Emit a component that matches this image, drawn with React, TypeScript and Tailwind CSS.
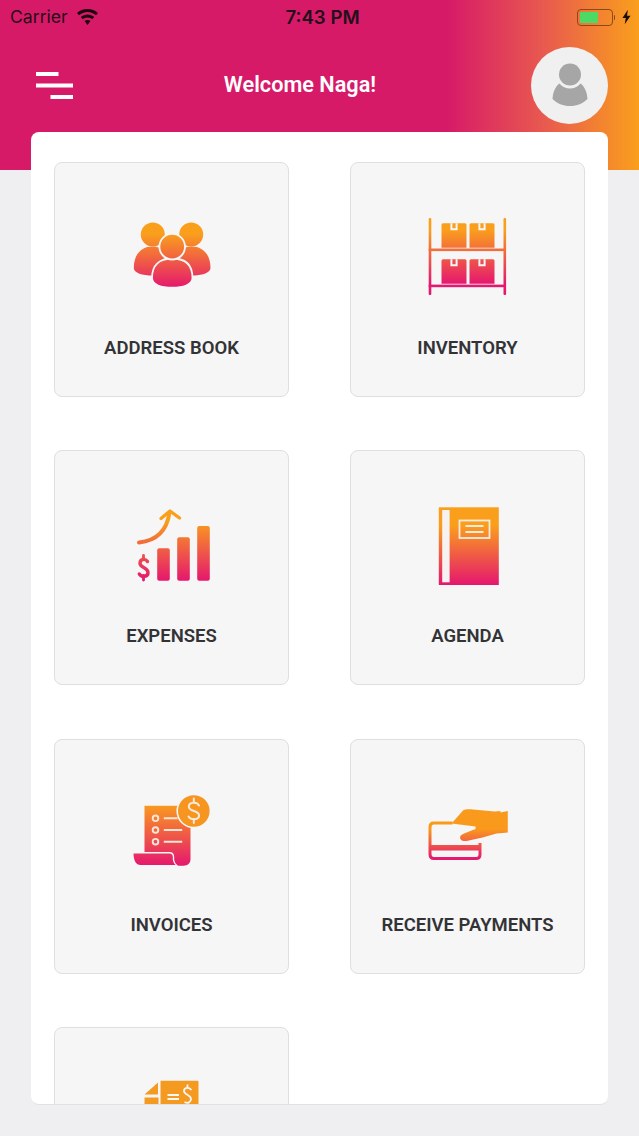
import React from "react";

const Grad = ({ id, y1, y2, from = "#fa9f1c", to = "#e5176f" }: { id: string; y1: number; y2: number; from?: string; to?: string }) => (
  <defs>
    <linearGradient id={id} gradientUnits="userSpaceOnUse" x1="0" x2="0" y1={y1} y2={y2}>
      <stop offset="0" stopColor={from} />
      <stop offset="1" stopColor={to} />
    </linearGradient>
  </defs>
);

const Box = ({ vb, children }: { vb: string; children: React.ReactNode }) => (
  <svg width="100" height="90" viewBox={vb} className="block shrink-0">
    {children}
  </svg>
);

const People = () => (
  <Box vb="1.5 0 100 90">
    <Grad id="g1" y1={24} y2={78} />
    <g fill="url(#g1)">
      <circle cx="32.3" cy="24.5" r="12" />
      <circle cx="70.7" cy="24.5" r="12" />
      <path d="M13.3 58C13.3 44 21 36.5 32 36.5C37 36.5 41 38 44 41L44 62L32 65.5C22 65.5 13.3 63 13.3 58Z" />
      <path d="M90 58C90 44 82 36.5 71 36.5C66 36.5 62 38 59 41L59 62L71 65.5C81 65.5 90 63 90 58Z" />
      <path d="M31.5 68C31.5 55 39 48.5 51.7 48.5C64.5 48.5 72 55 72 68C72 75 62 77.7 51.7 77.7C41 77.7 31.5 75 31.5 68Z" stroke="#f6f6f8" strokeWidth="1.8" />
      <circle cx="51.7" cy="36.7" r="12.8" stroke="#f6f6f8" strokeWidth="1.8" />
    </g>
  </Box>
);

const Carton = ({ x, y }: { x: number; y: number }) => (
  <g>
    <path d={`M${x + 1.5} ${y}H${x + 23.5}a1.5 1.5 0 0 1 1.5 1.5V${y + 24.5}H${x}V${y + 1.5}a1.5 1.5 0 0 1 1.5-1.5Z`} fill="url(#g2)" />
    <path d={`M${x + 12.5 - 3.6} ${y}v7h7.2v-7h-2v5h-3.2v-5Z`} fill="#f6f6f8" />
  </g>
);

const Shelf = () => (
  <Box vb="2.5 0 100 90">
    <Grad id="g2" y1={20} y2={74} />
    <g fill="url(#g2)">
      <rect x="13.2" y="8" width="2.6" height="77" rx="1" />
      <rect x="88" y="8" width="2.6" height="77" rx="1" />
      <rect x="13.2" y="38.5" width="77" height="2.6" />
      <rect x="13.2" y="74.6" width="77" height="2.6" />
    </g>
    <Carton x={26} y={13.3} />
    <Carton x={54} y={13.3} />
    <Carton x={26} y={49.3} />
    <Carton x={54} y={49.3} />
  </Box>
);

const Chart = () => (
  <Box vb="-3.5 -2 100 90">
    <Grad id="g3" y1={20} y2={81} />
    <g fill="url(#g3)">
      <rect x="31.7" y="48.3" width="12.6" height="32.5" rx="2" />
      <rect x="51.7" y="37.3" width="12.6" height="43.5" rx="2" />
      <rect x="71.7" y="26" width="12.6" height="54.8" rx="2" />
    </g>
    <g fill="none" stroke="url(#g3)" strokeLinecap="round" strokeLinejoin="round">
      <path d="M13.5 42.5C28 41 41 33 44 12.5" strokeWidth="4" />
      <path d="M35.5 18.5L44.5 11L54 18" strokeWidth="3.4" />
      <path d="M22 61.5C20 58.5 14.8 58.5 14.5 63C14.2 68 22.3 67 22.5 72.5C22.7 77 16 77.5 13.8 74" strokeWidth="3.4" />
      <path d="M18 55.5V59M18 75.5V80" strokeWidth="2.8" />
    </g>
  </Box>
);

const Notebook = () => (
  <Box vb="-2.5 -2 100 90">
    <Grad id="g4" y1={25} y2={85} />
    <rect x="18.3" y="7.3" width="60" height="77.7" fill="url(#g4)" />
    <rect x="21.7" y="10" width="7.4" height="72.3" fill="#f7f2f2" />
    <rect x="39" y="20.5" width="30" height="17.5" fill="none" stroke="#f9ecdf" strokeWidth="1.8" />
    <path d="M45 26H63M45 32H63" stroke="#f9ecdf" strokeWidth="1.8" />
  </Box>
);

const Invoice = () => (
  <Box vb="-3.5 2 100 90">
    <Grad id="g5" y1={18} y2={81} />
    <path d="M19 20.7H62L65 30V74C65 78.5 62 80.7 58 80.7H45L19 68Z" fill="url(#g5)" />
    <path d="M7.3 67.7H44C47 67.7 48 69.5 48 72V75C48.5 78 50 79.5 51.5 80.7H15C10 80.7 7.3 76 7.3 67.7Z" fill="url(#g5)" stroke="#f6f6f8" strokeWidth="1.4" />
    <g fill="none" stroke="#f9e6d8" strokeWidth="1.9">
      <circle cx="30" cy="33.3" r="2.8" />
      <circle cx="30" cy="45" r="2.8" />
      <circle cx="30" cy="56.7" r="2.8" />
      <path d="M38.3 33.3H52M38.3 45H56.7M38.3 56.7H56.7" />
    </g>
    <circle cx="68.3" cy="26" r="16.6" fill="#f6951f" stroke="#f6f6f8" strokeWidth="1.6" />
    <g fill="none" stroke="#fbe9d6" strokeWidth="2" strokeLinecap="round">
      <path d="M73.5 20.5C71.5 16.5 63.5 16.8 63.3 21.5C63.2 27 73.5 25 73.6 30.5C73.6 35 65.5 35.5 63 31.5" />
      <path d="M68.3 13.5V16.5M68.3 34V38" />
    </g>
  </Box>
);

const PayCard = () => (
  <Box vb="-2.5 -8 100 90">
    <Grad id="g6" y1={34} y2={64} from="#fa9a1c" to="#e5176f" />
    <path d="M32 28H13C10.5 28 9.5 29.5 9.5 32V59C9.5 62 11 63.5 13.5 63.5H55.5C58 63.5 59.5 62 59.5 59.5V48" fill="none" stroke="url(#g6)" strokeWidth="3" />
    <rect x="10" y="50" width="49" height="5.5" fill="url(#g6)" />
    <path d="M31 28.5L43 15C45 14 50 14 58 15L74 16.5L80 16V17.5L87.3 16V37.5L76 38.5L62 42.5L46 46C41 46.5 38.5 44 40 41C41 39 45 38 55 34V31.5Z" fill="url(#g6)" />
  </Box>
);

const Receipt = () => (
  <Box vb="0 0 100 90">
    <g fill="#f59a20">
      <path d="M22.5 19.5L36 7.5V19.5Z" />
      <path d="M22.5 22.5H36.5V29H22.5Z" />
      <path d="M38.5 5.7H75.5C76 5.7 76.5 6.2 76.5 7V29H38.5Z" />
    </g>
    <g fill="none" stroke="#f8f6f4" strokeWidth="1.8">
      <path d="M45.5 20H57M45.5 24H57" />
      <path d="M69.5 15C67 11.5 62 12.5 62 16C62 20 69 19.5 69 24C69 27 66 29 62.5 27" />
      <path d="M65.5 9.5V13" />
    </g>
  </Box>
);

const items: { label: string; icon: React.ReactNode }[] = [
  { label: "ADDRESS BOOK", icon: <People /> },
  { label: "INVENTORY", icon: <Shelf /> },
  { label: "EXPENSES", icon: <Chart /> },
  { label: "AGENDA", icon: <Notebook /> },
  { label: "INVOICES", icon: <Invoice /> },
  { label: "RECEIVE PAYMENTS", icon: <PayCard /> },
  { label: "", icon: <Receipt /> },
];

const Tile = ({ label, icon }: { label: string; icon: React.ReactNode }) => (
  <div className="flex h-[235px] w-[235px] flex-col items-center rounded-lg border border-[#dfdfe2] bg-[#f6f6f7] pt-[47px]">
    {icon}
    <div className="mt-[38px] whitespace-nowrap font-['Roboto',sans-serif] text-[18.5px] leading-[20px] font-semibold text-[#333336]">{label}</div>
  </div>
);

export default function App() {
  return (
    <div className="relative h-[1136px] w-[639px] overflow-hidden bg-[#efeff1]">
      <header className="flex h-[170px] flex-col bg-[linear-gradient(90deg,#d71a68_0%,#d71a68_70%,#e8594f_85%,#fa9f1c_100%)]">
        <div className="flex h-[34px] items-center justify-between pr-2 pl-[10px] font-['Inter',sans-serif] text-[#260a18]">
          <div className="flex w-[200px] items-center gap-[9px]">
            <span className="text-[17.6px] leading-none font-normal">Carrier</span>
            <svg width="21" height="16" viewBox="0 0 21 16" fill="#1c0711">
              <path d="M10.5 0C6.3 0 2.8 1.6 0 4L2 6.3C4.3 4.3 7.2 3 10.5 3C13.8 3 16.7 4.3 19 6.3L21 4C18.2 1.6 14.7 0 10.5 0Z" />
              <path d="M10.5 5.5C7.9 5.5 5.6 6.5 3.8 8.1L5.8 10.3C7 9.2 8.7 8.5 10.5 8.5C12.3 8.5 14 9.2 15.2 10.3L17.2 8.1C15.4 6.5 13.1 5.5 10.5 5.5Z" />
              <path d="M10.5 11C9.3 11 8.3 11.4 7.5 12.1L10.5 16L13.5 12.1C12.7 11.4 11.7 11 10.5 11Z" />
            </svg>
          </div>
          <span className="pl-[4px] text-[18.6px] leading-none font-semibold text-[#22101a]">7:43 PM</span>
          <div className="flex w-[200px] items-center justify-end">
            <div className="flex h-[17px] w-[36px] items-center rounded-[4px] border border-[#8a4a18] p-[2px]">
              <div className="h-full w-[18px] rounded-[1px] bg-[#4cd964]" />
            </div>
            <div className="ml-[1px] h-[5px] w-[1.5px] rounded-r-sm bg-[#8a4a18]" />
            <svg width="9" height="16" viewBox="0 0 10 16" fill="#1a0d05" className="ml-[7px]">
              <path d="M6.5 0L0.5 9H4.2L3 16L9.5 6.5H5.6Z" />
            </svg>
          </div>
        </div>
        <div className="mt-[13px] flex items-center pr-[31px] pl-[36px]">
          <svg width="37" height="27" viewBox="0 0 37 27" fill="#fff" className="shrink-0">
            <rect x="0" y="0" width="22.5" height="4" />
            <rect x="0" y="11.5" width="37" height="4" />
            <rect x="14.5" y="23" width="22.5" height="4" />
          </svg>
          <h1 className="flex-1 pr-[4px] pb-[1px] text-center font-['Roboto',sans-serif] text-[21.7px] leading-none font-semibold text-white">Welcome Naga!</h1>
          <div className="flex h-[77px] w-[77px] shrink-0 items-center justify-center rounded-full bg-[#f0f0f1]">
            <svg width="36" height="44" viewBox="0 0 36 44" fill="#a6a6a6" className="-mt-[2px]">
              <circle cx="18" cy="11.5" r="11" />
              <path d="M7.5 20.5C10 24 14 25.5 18 25.5C22 25.5 26 24 28.5 20.5C32 23 35 28 35.5 36C31 40.5 25 43 18 43C11 43 5 40.5 0.5 36C1 28 4 23 7.5 20.5Z" />
            </svg>
          </div>
        </div>
      </header>
      <main className="mx-[31px] -mt-[38px] h-[973px] w-[577px] overflow-hidden rounded-lg border-b border-[#e1e1e4] bg-white">
        <div className="grid grid-cols-[235px_235px] gap-x-[61px] gap-y-[53.4px] pt-[30px] pl-[23px]">
          {items.map((it, i) => (
            <Tile key={i} label={it.label} icon={it.icon} />
          ))}
        </div>
      </main>
    </div>
  );
}
